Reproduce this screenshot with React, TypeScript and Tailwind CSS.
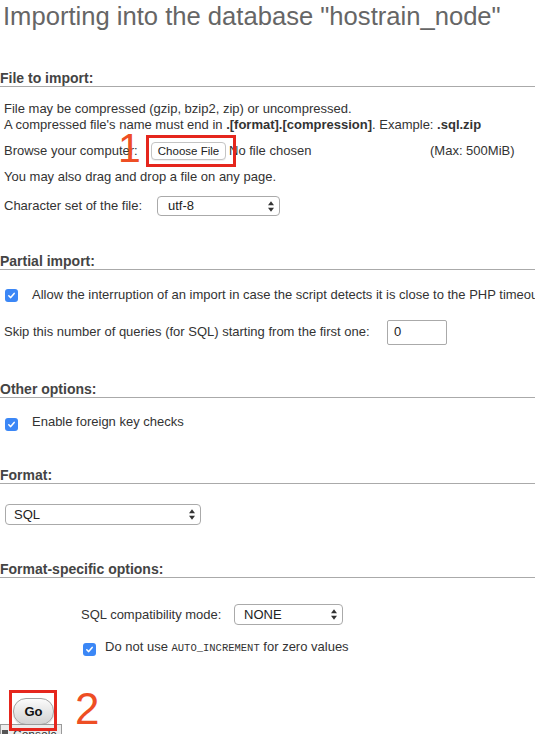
import React from "react";

const FONT = { fontFamily: '"Liberation Sans", Arial, Helvetica, sans-serif' };

function Heading({ children, className = "" }: { children: React.ReactNode; className?: string }) {
  return (
    <div
      className={`h-[17px] border-b border-[#aaa] text-[14px] font-bold leading-[16px] text-[#444] whitespace-nowrap ${className}`}
    >
      {children}
    </div>
  );
}

function Check() {
  return (
    <span className="flex h-[13px] w-[13px] shrink-0 items-center justify-center rounded-[3px] bg-[#3b87f6]">
      <svg width="9" height="9" viewBox="0 0 9 9">
        <path d="M1.8 4.8 L3.7 6.6 L7.2 2.4" fill="none" stroke="#fff" strokeWidth="1.5" strokeLinecap="round" strokeLinejoin="round" />
      </svg>
    </span>
  );
}

function Arrows() {
  return (
    <svg width="6" height="11" viewBox="0 0 6 11" className="shrink-0">
      <path d="M0 4.3 L3 0.3 L6 4.3 Z" fill="#333" />
      <path d="M0 6.7 L3 10.7 L6 6.7 Z" fill="#333" />
    </svg>
  );
}

function Select({ value, className = "", pl = "pl-[9px]" }: { value: string; className?: string; pl?: string }) {
  return (
    <div
      className={`flex items-center justify-between rounded-[4px] border border-[#aaa] bg-white pr-[5px] text-[13px] text-[#222] ${pl} ${className}`}
    >
      <span>{value}</span>
      <Arrows />
    </div>
  );
}

export default function App() {
  return (
    <div className="relative h-[734px] w-[535px] overflow-hidden bg-white text-[#333]" style={FONT}>
      <h1 className="mt-[1px] whitespace-nowrap pl-[3px] text-[25.6px] leading-[30px] text-[#666]">
        Importing into the database "hostrain_node"
      </h1>

      {/* File to import */}
      <Heading className="mt-[39px]">File to import:</Heading>
      <div className="pl-[4px] text-[13px] leading-[16px]">
        <div className="mt-[14px]">File may be compressed (gzip, bzip2, zip) or uncompressed.</div>
        <div>
          A compressed file's name must end in <b>.[format].[compression]</b>. Example: <b>.sql.zip</b>
        </div>
        <div className="mt-[5px] flex h-[26px] items-center whitespace-nowrap">
          <span className="w-[147px]">Browse your computer:</span>
          <span className="flex h-[18px] w-[75px] items-center justify-center rounded-[4px] border border-[#c4c4c4] bg-white text-[11.5px] text-[#222] shadow-[0_1px_0_rgba(0,0,0,0.06)]">
            Choose File
          </span>
          <span className="w-[204px] pl-[3px]">No file chosen</span>
          <span>(Max: 500MiB)</span>
        </div>
        <div className="mt-[5px]">You may also drag and drop a file on any page.</div>
        <div className="mt-[9px] flex h-[24px] items-center whitespace-nowrap">
          <span className="w-[153px]">Character set of the file:</span>
          <Select value="utf-8" className="h-[20px] w-[123px]" pl="pl-[10px]" />
        </div>
      </div>

      {/* Partial import */}
      <Heading className="mt-[35px]">Partial import:</Heading>
      <div className="pl-[4px] text-[13px] leading-[16px]">
        <div className="mt-[15px] flex h-[20px] items-center whitespace-nowrap pl-[1px]">
          <Check />
          <span className="ml-[14px]">
            Allow the interruption of an import in case the script detects it is close to the PHP timeout limit.
          </span>
        </div>
        <div className="mt-[14px] flex h-[26px] items-center whitespace-nowrap">
          <span className="w-[383px]">Skip this number of queries (for SQL) starting from the first one:</span>
          <span className="flex h-[25px] w-[60px] items-center rounded-[2px] border border-[#aaa] pl-[6px] text-[13px] text-[#222]">
            0
          </span>
        </div>
      </div>

      {/* Other options */}
      <Heading className="mt-[36px]">Other options:</Heading>
      <div className="pl-[4px] text-[13px] leading-[16px]">
        <div className="mt-[16px] flex h-[20px] items-center whitespace-nowrap pl-[1px]">
          <Check />
          <span className="ml-[14px] -mt-[4px]">Enable foreign key checks</span>
        </div>
      </div>

      {/* Format */}
      <Heading className="mt-[33px]">Format:</Heading>
      <div className="mt-[20px] pl-[5px]">
        <Select value="SQL" className="h-[21px] w-[196px]" pl="pl-[8px]" />
      </div>

      {/* Format-specific options */}
      <Heading className="mt-[36px]">Format-specific options:</Heading>
      <div className="pl-[81px] text-[13px] leading-[16px]">
        <div className="mt-[26px] flex h-[21px] items-center whitespace-nowrap">
          <span className="w-[153px]">SQL compatibility mode:</span>
          <Select value="NONE" className="h-[21px] w-[109px]" />
        </div>
        <div className="mt-[14px] flex h-[20px] items-center whitespace-nowrap pl-[2px]">
          <Check />
          <span className="ml-[9px] -mt-[3px]">
            Do not use{" "}
            <code className="text-[10.5px] uppercase" style={{ fontFamily: '"Liberation Mono", "Courier New", monospace' }}>
              auto_increment
            </code>{" "}
            for zero values
          </span>
        </div>
      </div>

      {/* Go */}
      <div className="mt-[39px] pl-[13px]">
        <button className="flex h-[27px] w-[41px] items-center justify-center rounded-[13px] border border-[#a3a3a3] bg-gradient-to-b from-[#fbfbfb] to-[#d2d2d2] text-[13px] font-bold text-[#111] shadow-[0_1px_1px_rgba(0,0,0,0.15)]">
          Go
        </button>
      </div>

      {/* console tab at bottom */}
      <div className="absolute left-0 top-[724px] flex h-[20px] w-[62px] items-start border border-[#9a9a9a] bg-[#ececec] pl-[1px] pt-[4px]">
        <span className="mt-[1px] h-[6px] w-[6px] bg-[#555]" />
        <span className="ml-[5px] text-[12px] leading-[12px] text-[#333]">Console</span>
      </div>

      {/* annotations */}
      <div className="absolute left-[146px] top-[135px] h-[32px] w-[90px] border-[3px] border-[#e5261d]" />
      <div className="absolute left-[118px] top-[128px] text-[41px] leading-[41px] text-[#ee4e24]">1</div>
      <div className="absolute left-[9px] top-[690px] h-[41px] w-[48px] border-[3px] border-[#e5261d]" />
      <div className="absolute left-[75px] top-[687px] text-[44px] leading-[44px] text-[#ee4e24]">2</div>
    </div>
  );
}
